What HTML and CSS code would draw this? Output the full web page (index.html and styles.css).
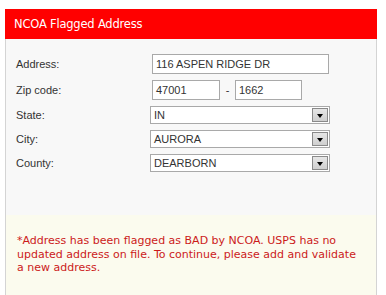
FILE: index.html
```html
<!DOCTYPE html>
<html>
<head>
<meta charset="utf-8">
<link rel="stylesheet" href="styles.css">
</head>
<body>
<div class="panel">
  <div class="header">NCOA Flagged Address</div>
  <div class="form">
    <div class="row text-row">
      <span class="label">Address:</span>
      <div class="field"><span class="input wide">116 ASPEN RIDGE DR</span></div>
    </div>
    <div class="row text-row">
      <span class="label">Zip code:</span>
      <div class="field zip">
        <span class="input zip5">47001</span>
        <span class="dash">-</span>
        <span class="input zip4">1662</span>
      </div>
    </div>
    <div class="row sel-row">
      <span class="label">State:</span>
      <div class="select"><span class="val">IN</span><span class="arrow"></span></div>
    </div>
    <div class="row sel-row">
      <span class="label">City:</span>
      <div class="select"><span class="val">AURORA</span><span class="arrow"></span></div>
    </div>
    <div class="row sel-row">
      <span class="label">County:</span>
      <div class="select"><span class="val">DEARBORN</span><span class="arrow"></span></div>
    </div>
  </div>
  <div class="notice">
    <p>*Address has been flagged as BAD by NCOA. USPS has no updated address on file. To continue, please add and validate a new address.</p>
  </div>
</div>
</body>
</html>
```

FILE: styles.css
```css
html, body {
  margin: 0;
  padding: 0;
  background: #ffffff;
}
body {
  font-family: "Liberation Sans", Arial, sans-serif;
  font-size: 11px;
  color: #333;
}
.panel {
  margin: 9px 0 0 5px;
  width: 370px;
  height: 286px;
  border-left: 1px solid #d4d4d4;
  border-right: 1px solid #d4d4d4;
  background: #f8f8f8;
  display: flex;
  flex-direction: column;
}
.header {
  background: #ff0000;
  color: #fff;
  height: 30px;
  margin: 0 -1px;
  padding-left: 9px;
  display: flex;
  align-items: center;
  font-family: "DejaVu Sans", Verdana, sans-serif;
  font-size: 11.5px;
  letter-spacing: -0.2px;
}
.form {
  padding: 15px 0 0 10px;
  height: 176px;
  box-sizing: border-box;
}
.row {
  display: grid;
  grid-template-columns: 134px auto;
  align-items: center;
}
.text-row {
  height: 20px;
  margin-bottom: 6px;
}
.sel-row {
  height: 18px;
  margin-bottom: 6px;
}
.label {
  color: #333;
  font-size: 11px;
}
.field {
  display: flex;
  align-items: center;
  margin-left: 2px;
}
.input {
  display: flex;
  align-items: center;
  box-sizing: border-box;
  height: 20px;
  background: #fff;
  border: 1px solid #a9a9a9;
  padding-left: 3px;
  font-size: 11px;
  color: #333;
}
.wide { width: 177px; }
.zip5 { width: 68px; }
.zip4 { width: 67px; }
.dash {
  width: 15px;
  text-align: center;
  color: #333;
}
.select {
  box-sizing: border-box;
  width: 180px;
  height: 18px;
  background: #fff;
  border: 1px solid #a9a9a9;
  display: flex;
  align-items: center;
  justify-content: space-between;
  padding: 0 1px 0 3px;
}
.val {
  font-size: 11px;
  color: #333;
}
.arrow {
  box-sizing: border-box;
  width: 16px;
  height: 14px;
  background: linear-gradient(#e6e6e6, #cfcfcf);
  border: 1px solid #8a8a8a;
  position: relative;
}
.arrow::after {
  content: "";
  position: absolute;
  left: 4px;
  top: 5px;
  border-left: 3.5px solid transparent;
  border-right: 3.5px solid transparent;
  border-top: 4px solid #000;
}
.notice {
  flex: 1;
  background: #fbfbee;
  padding: 19px 10px 0 11px;
}
.notice p {
  margin: 0;
  color: #cc1a1a;
  font-family: "DejaVu Sans", Verdana, sans-serif;
  font-size: 11px;
  line-height: 13.5px;
}
```
